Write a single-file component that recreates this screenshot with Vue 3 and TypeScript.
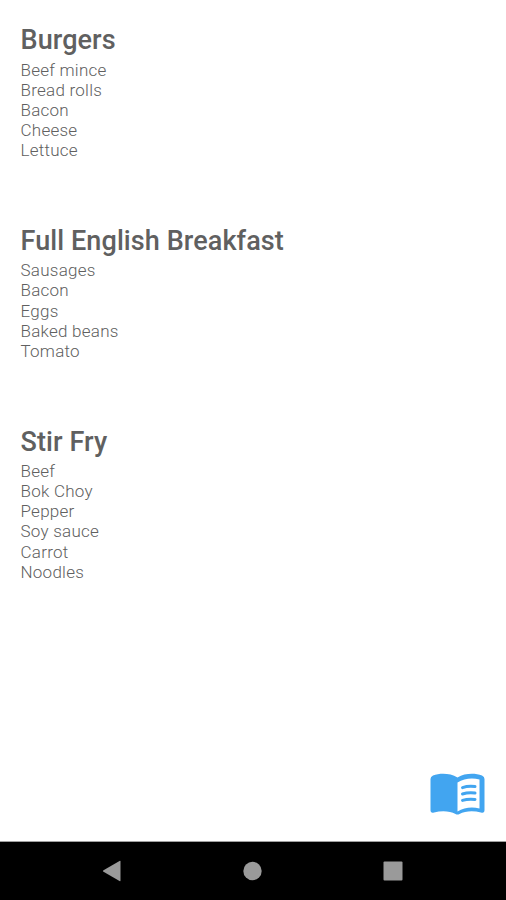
<script setup lang="ts">
interface Meal { name: string; items: string[] }
const meals: Meal[] = [
  { name: 'Burgers', items: ['Beef mince', 'Bread rolls', 'Bacon', 'Cheese', 'Lettuce'] },
  { name: 'Full English Breakfast', items: ['Sausages', 'Bacon', 'Eggs', 'Baked beans', 'Tomato'] },
  { name: 'Stir Fry', items: ['Beef', 'Bok Choy', 'Pepper', 'Soy sauce', 'Carrot', 'Noodles'] },
]
</script>

<template>
  <div class="screen">
    <main class="list">
      <section v-for="meal in meals" :key="meal.name" class="meal">
        <h2>{{ meal.name }}</h2>
        <ul>
          <li v-for="item in meal.items" :key="item">{{ item }}</li>
        </ul>
      </section>
    </main>
    <button class="book" aria-label="Recipes">
      <svg viewBox="0 0 55 42" width="55" height="42">
        <path fill="#42a5f0" d="M3 2.500C10 0 20 0 27.500 4.500C35 0 45 0 52 2.500Q54.500 3.500 54.500 6V37Q54.500 40.500 51 39.500C43 37.500 35 38 29.500 41Q27.500 42 25.500 41C20 38 12 37.500 4 39.500Q.5 40.500 .5 37V6Q.5 3.500 3 2.500Z" />
        <path fill="#fff" d="M27.500 9.500C34 5.500 42 4.500 49.500 6.500V35.500C42 33.500 34 34.500 27.500 38.500Z" />
        <path fill="none" stroke="#42a5f0" stroke-width="3" stroke-linecap="round" d="M32.500 14.600Q38 12.800 45 13.600M32.500 21Q38 19.200 45 20M32.500 27.400Q38 25.600 45 26.400" />
      </svg>
    </button>
    <nav class="navbar">
      <svg viewBox="0 0 19 22" width="19" height="22"><path d="M1.500 10.200L17.500 1Q18.500 .5 18.500 1.500V20.500Q18.500 21.500 17.500 21L1.500 11.800Q.2 11 1.500 10.200Z" /></svg>
      <svg viewBox="0 0 20 20" width="20" height="20"><circle cx="10.500" cy="10" r="9.200" /></svg>
      <svg viewBox="0 0 20 20" width="20" height="20"><rect x=".5" y=".5" width="19" height="19" rx="1" /></svg>
    </nav>
  </div>
</template>

<style>
body { margin: 0; background: #fff; }
</style>
<style scoped>
.screen { height: 900px; display: flex; flex-direction: column; background: #fff; font-family: Roboto, sans-serif; color: #606060; }
.list { flex: 1; padding: 20.3px 20.5px 0; }
.meal { margin-bottom: 60.6px; }
h2 { margin: 0; font-size: 27px; line-height: 40px; font-weight: 500; letter-spacing: 0.09px; color: #606060; }
ul { margin: -0.7px 0 0; padding: 0; list-style: none; }
li { font-size: 17px; line-height: 20.15px; font-weight: 350; letter-spacing: 0.25px; }
.book { align-self: flex-end; margin: 0 21px 26px 0; padding: 0; border: 0; background: none; display: flex; }
.navbar { height: 59px; background: #000; border-top: 1px solid #a0a0a0; display: flex; align-items: center; justify-content: space-between; padding: 0 103px 0 102px; box-sizing: border-box; fill: #9a9a9a; }
</style>
